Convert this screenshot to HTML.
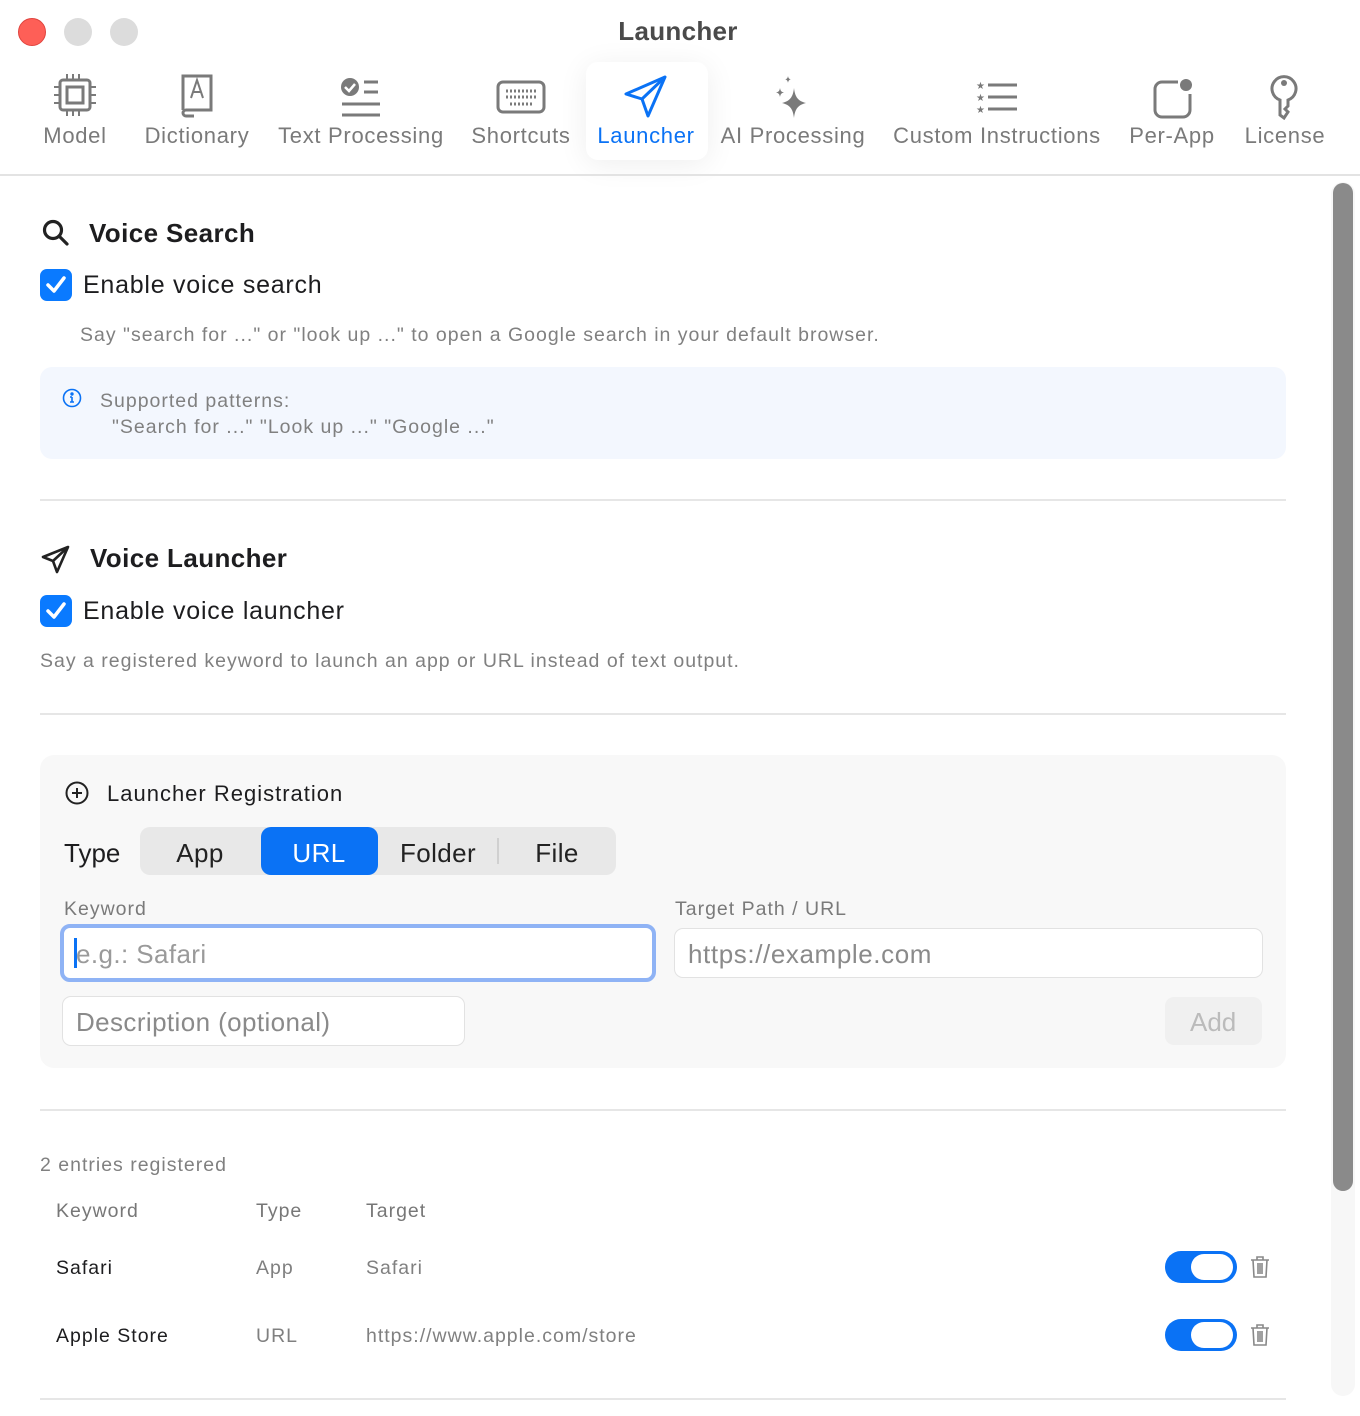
<!DOCTYPE html>
<html><head><meta charset="utf-8"><style>
*{margin:0;padding:0;box-sizing:border-box}
body{width:1360px;height:1416px;background:#fff;font-family:"Liberation Sans",sans-serif;position:relative;overflow:hidden;color:#1d1d1f}
.a{position:absolute;white-space:nowrap}
.dot{position:absolute;top:18px;width:28px;height:28px;border-radius:50%;background:#dcdcdc}
.tab{position:absolute;top:123px;font-size:22px;color:#7a7a7a;transform:translateX(-50%);letter-spacing:.7px}
.ic{position:absolute;top:72px}
.sep{position:absolute;left:40px;width:1246px;height:2px;background:#e6e6e6}
.cb{position:absolute;width:32px;height:32px;border-radius:7px;background:#0a7aff}
.muted{color:#808080}
.s{font-size:19.5px;letter-spacing:1px}
.seg{position:absolute;font-size:26px;color:#222;transform:translateX(-50%);letter-spacing:.4px}
.toggle{position:absolute;left:1165px;width:72px;height:32px;border-radius:16px;background:#0a72f5}
.toggle::after{content:"";position:absolute;right:4px;top:3px;width:42px;height:26px;border-radius:13px;background:#fff}
</style></head><body>
<div class="dot" style="left:18px;background:#fe5f57;border:1px solid #e0443e"></div>
<div class="dot" style="left:64px"></div>
<div class="dot" style="left:110px"></div>
<div class="a" style="left:0;width:1356px;text-align:center;top:16px;font-size:26px;font-weight:bold;color:#4a4a4a;letter-spacing:.3px">Launcher</div>

<div class="a" style="left:586px;top:62px;width:122px;height:98px;border-radius:12px;background:#fff;box-shadow:0 4px 30px rgba(0,0,0,.07)"></div>

<svg class="ic" style="left:54px" width="42" height="46" viewBox="0 0 42 46" fill="none" stroke="#7a7a7a" stroke-width="3"><rect x="6" y="8" width="30" height="30" rx="3"/><rect x="13" y="15" width="16" height="16"/><path d="M13 2v6M19 2v6M25 2v6M13 38v6M19 38v6M25 38v6M0 15h6M0 23h6M0 31h6M36 15h6M36 23h6M36 31h6" stroke-width="2"/></svg>
<svg class="ic" style="left:180px" width="36" height="46" viewBox="0 0 36 46" fill="none" stroke="#7a7a7a" stroke-width="3"><path d="M3 38V4h28v34H6a3 3 0 0 0 0 6h8"/><path d="M11 26l6-18 6 18M13 20h8" stroke-width="2"/></svg>
<svg class="ic" style="left:340px;top:78px" width="42" height="40" viewBox="0 0 42 40"><circle cx="10" cy="9" r="9" fill="#7a7a7a"/><path d="M5 9l4 4 6-7" stroke="#fff" stroke-width="2.5" fill="none"/><path d="M24 4h14M24 14h14M2 26h38M2 37h38" stroke="#7a7a7a" stroke-width="3"/></svg>
<svg class="ic" style="left:496px;top:80px" width="50" height="34" viewBox="0 0 50 34" fill="none" stroke="#7a7a7a"><rect x="2" y="2" width="46" height="30" rx="5" stroke-width="3"/><path d="M10 11h30M10 17h30M14 24h22" stroke-width="3" stroke-dasharray="2 2"/></svg>
<svg class="ic" style="left:623px;top:74px" width="46" height="46" viewBox="0 0 46 46" fill="none" stroke="#0a72f5" stroke-width="3" stroke-linejoin="round"><path d="M42 3L3 20l16 5 6 17z"/><path d="M42 3L19 25"/></svg>
<svg class="ic" style="left:772px;top:74px" width="44" height="46" viewBox="0 0 44 46" fill="#7a7a7a"><path d="M22 14c1 9 4 13 12 15-8 2-11 6-12 15-1-9-4-13-12-15 8-2 11-6 12-15z"/><path d="M8 14c.5 3 1.5 4 4 4.5-2.5.5-3.5 1.5-4 4.5-.5-3-1.5-4-4-4.5 2.5-.5 3.5-1.5 4-4.5zM16 2c.4 2 1 3 3 3.4-2 .4-2.6 1.4-3 3.4-.4-2-1-3-3-3.4 2-.4 2.6-1.4 3-3.4z"/></svg>
<svg class="ic" style="left:976px;top:80px" width="44" height="34" viewBox="0 0 44 34"><g fill="#7a7a7a" font-size="10" font-family="DejaVu Sans"><text x="0" y="9">★</text><text x="0" y="21">★</text><text x="0" y="33">★</text></g><path d="M12 5h29M12 17h29M12 29h29" stroke="#7a7a7a" stroke-width="3"/></svg>
<svg class="ic" style="left:1152px;top:76px" width="44" height="44" viewBox="0 0 44 44" fill="none" stroke="#7a7a7a" stroke-width="3"><path d="M26 6H10a7 7 0 0 0-7 7v21a7 7 0 0 0 7 7h21a7 7 0 0 0 7-7V18"/><circle cx="34" cy="9" r="6" fill="#7a7a7a" stroke="none"/></svg>
<svg class="ic" style="left:1268px;top:72px" width="32" height="48" viewBox="0 0 32 48" fill="none" stroke="#7a7a7a" stroke-width="3"><path d="M12 28A12 12 0 1 1 20 28v6l-3 3 3 3-4 6-4-3z"/><circle cx="16" cy="11" r="3" fill="#7a7a7a" stroke="none"/></svg>

<div class="tab" style="left:75px">Model</div>
<div class="tab" style="left:197px">Dictionary</div>
<div class="tab" style="left:361px">Text Processing</div>
<div class="tab" style="left:521px">Shortcuts</div>
<div class="tab" style="left:646px;color:#0a72f5">Launcher</div>
<div class="tab" style="left:793px">AI Processing</div>
<div class="tab" style="left:997px">Custom Instructions</div>
<div class="tab" style="left:1172px">Per-App</div>
<div class="tab" style="left:1285px">License</div>
<div class="a" style="left:0;top:174px;width:1360px;height:2px;background:#e3e3e3"></div>

<div class="a" style="left:1331px;top:182px;width:24px;height:1214px;border-radius:12px;background:#f7f7f7"></div>
<div class="a" style="left:1333px;top:183px;width:20px;height:1008px;border-radius:10px;background:#8a8a8a"></div>

<svg class="a" style="left:42px;top:219px" width="28" height="28" viewBox="0 0 28 28" fill="none" stroke="#222" stroke-width="3.2"><circle cx="11" cy="11" r="8.5"/><path d="M17 17l8 8" stroke-linecap="round"/></svg>
<div class="a" style="left:89px;top:218px;font-size:26px;font-weight:bold;letter-spacing:.4px">Voice Search</div>
<div class="cb" style="left:40px;top:269px"></div>
<svg class="a" style="left:40px;top:269px" width="32" height="32"><path d="M8 16l6 6 10-13" stroke="#fff" stroke-width="3.5" fill="none" stroke-linecap="round" stroke-linejoin="round"/></svg>
<div class="a" style="left:83px;top:271px;font-size:25px;letter-spacing:.75px">Enable voice search</div>
<div class="a muted s" style="left:80px;top:324px">Say "search for ..." or "look up ..." to open a Google search in your default browser.</div>
<div class="a" style="left:40px;top:367px;width:1246px;height:92px;border-radius:12px;background:#f3f7fe"></div>
<svg class="a" style="left:62px;top:388px" width="20" height="20" viewBox="0 0 20 20" fill="none" stroke="#0a72f5" stroke-width="1.6"><circle cx="10" cy="10" r="8.5"/><path d="M10 9v5M8 14h4M8 9h2"/><circle cx="10" cy="6" r=".9" fill="#0a72f5"/></svg>
<div class="a muted s" style="left:100px;top:390px">Supported patterns:</div>
<div class="a muted s" style="left:112px;top:416px">"Search for ..." "Look up ..." "Google ..."</div>
<div class="sep" style="top:499px"></div>

<svg class="a" style="left:41px;top:544px" width="30" height="30" viewBox="0 0 30 30" fill="none" stroke="#222" stroke-width="2.6" stroke-linejoin="round"><path d="M27 3L2 13l10 4 4 11z"/><path d="M27 3L12 17"/></svg>
<div class="a" style="left:90px;top:543px;font-size:26px;font-weight:bold;letter-spacing:.4px">Voice Launcher</div>
<div class="cb" style="left:40px;top:595px"></div>
<svg class="a" style="left:40px;top:595px" width="32" height="32"><path d="M8 16l6 6 10-13" stroke="#fff" stroke-width="3.5" fill="none" stroke-linecap="round" stroke-linejoin="round"/></svg>
<div class="a" style="left:83px;top:597px;font-size:25px;letter-spacing:.75px">Enable voice launcher</div>
<div class="a muted s" style="left:40px;top:650px">Say a registered keyword to launch an app or URL instead of text output.</div>
<div class="sep" style="top:713px"></div>

<div class="a" style="left:40px;top:755px;width:1246px;height:313px;border-radius:14px;background:#f8f8f8"></div>
<svg class="a" style="left:65px;top:781px" width="24" height="24" viewBox="0 0 24 24" fill="none" stroke="#222" stroke-width="2"><circle cx="12" cy="12" r="10.5"/><path d="M12 7v10M7 12h10"/></svg>
<div class="a" style="left:107px;top:781px;font-size:22px;letter-spacing:1px">Launcher Registration</div>
<div class="a" style="left:64px;top:838px;font-size:26px">Type</div>
<div class="a" style="left:140px;top:827px;width:476px;height:48px;border-radius:10px;background:#e8e8e8"></div>
<div class="a" style="left:261px;top:827px;width:117px;height:48px;border-radius:10px;background:#0a72f5"></div>
<div class="a" style="left:497px;top:838px;width:2px;height:26px;background:#d0d0d0"></div>
<div class="seg" style="left:200px;top:838px">App</div>
<div class="seg" style="left:319px;top:838px;color:#fff">URL</div>
<div class="seg" style="left:438px;top:838px">Folder</div>
<div class="seg" style="left:557px;top:838px">File</div>
<div class="a s" style="left:64px;top:898px;color:#7a7a7a">Keyword</div>
<div class="a s" style="left:675px;top:898px;color:#7a7a7a">Target Path / URL</div>
<div class="a" style="left:60px;top:924px;width:596px;height:58px;border-radius:10px;border:4px solid #8fb3f5;background:#fff"></div>
<div class="a" style="left:74px;top:938px;width:3px;height:30px;background:#0a72f5"></div>
<div class="a" style="left:76px;top:939px;font-size:26px;color:#9a9a9a;letter-spacing:.4px">e.g.: Safari</div>
<div class="a" style="left:674px;top:928px;width:589px;height:50px;border-radius:9px;border:1px solid #e2e2e2;background:#fff"></div>
<div class="a" style="left:688px;top:939px;font-size:26px;color:#8a8a8a;letter-spacing:.6px">https://example.com</div>
<div class="a" style="left:62px;top:996px;width:403px;height:50px;border-radius:9px;border:1px solid #e2e2e2;background:#fff"></div>
<div class="a" style="left:76px;top:1007px;font-size:26px;color:#8a8a8a;letter-spacing:.4px">Description (optional)</div>
<div class="a" style="left:1165px;top:997px;width:97px;height:48px;border-radius:9px;background:#f0f0f0"></div>
<div class="a" style="left:1190px;top:1007px;font-size:26px;color:#bbb">Add</div>
<div class="sep" style="top:1109px"></div>

<div class="a muted s" style="left:40px;top:1154px">2 entries registered</div>
<div class="a s" style="left:56px;top:1200px;color:#777">Keyword</div>
<div class="a s" style="left:256px;top:1200px;color:#777">Type</div>
<div class="a s" style="left:366px;top:1200px;color:#777">Target</div>
<div class="a s" style="left:56px;top:1257px">Safari</div>
<div class="a muted s" style="left:256px;top:1257px">App</div>
<div class="a muted s" style="left:366px;top:1257px">Safari</div>
<div class="toggle" style="top:1251px"></div>
<div class="a s" style="left:56px;top:1325px">Apple Store</div>
<div class="a muted s" style="left:256px;top:1325px">URL</div>
<div class="a muted s" style="left:366px;top:1325px">https://www.apple.com/store</div>
<div class="toggle" style="top:1319px"></div>
<svg class="a" style="left:1250px;top:1256px" width="20" height="22" viewBox="0 0 20 22" fill="none" stroke="#888" stroke-width="1.6"><path d="M1 4h18M7 4V1h6v3M3 4l1 17h12l1-17M8 7v11M10 7v11M12 7v11"/></svg>
<svg class="a" style="left:1250px;top:1324px" width="20" height="22" viewBox="0 0 20 22" fill="none" stroke="#888" stroke-width="1.6"><path d="M1 4h18M7 4V1h6v3M3 4l1 17h12l1-17M8 7v11M10 7v11M12 7v11"/></svg>
<div class="sep" style="top:1398px"></div>
</body></html>
